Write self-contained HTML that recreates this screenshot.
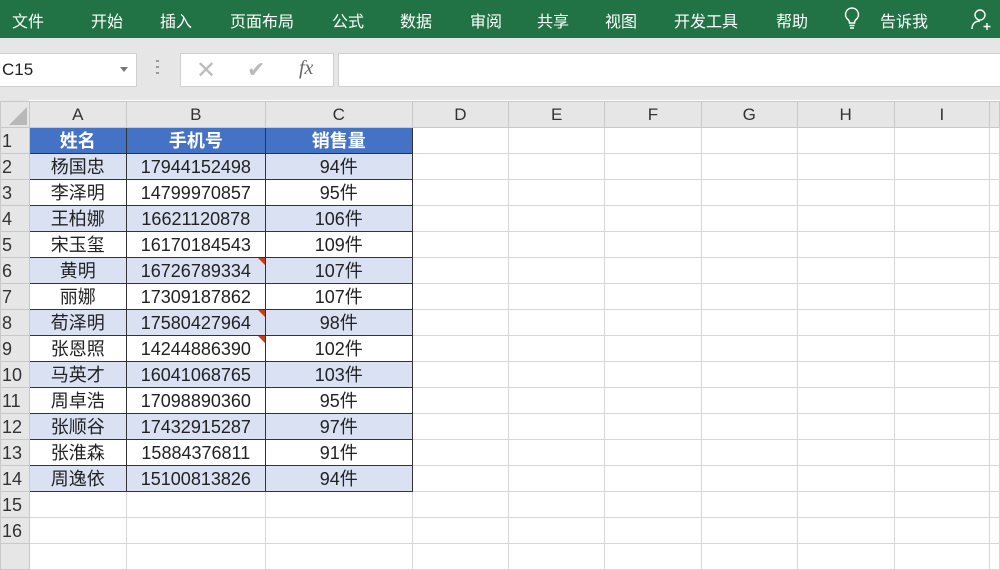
<!DOCTYPE html>
<html><head><meta charset="utf-8"><style>
*{margin:0;padding:0;box-sizing:border-box}
body{width:1000px;height:538px;overflow:hidden;background:#fff;font-family:"Liberation Sans","Noto Sans CJK SC",sans-serif;position:relative}
.top{position:absolute;left:0;top:0;width:1000px;height:38px;background:#217346;color:#fff;font-size:16px}
.top span{position:absolute;top:8px}
.gray{position:absolute;left:0;top:38px;width:1000px;height:62px;background:#e6e6e6}
.box{position:absolute;background:#fff;border:1px solid #d0d0d0}
table{position:absolute;left:0;top:101px;border-collapse:collapse;table-layout:fixed}
tr{height:26px}
td{height:26px;line-height:22px;border:1px solid #d6d6d6;font-size:18px;color:#222;text-align:center;padding:0;white-space:nowrap;overflow:hidden;position:relative}
tr.h td{background:#e6e6e6;color:#333;font-size:17px;border-color:#c8c8c8}
td.r{background:#e6e6e6;text-align:left;padding-left:1px;color:#333;border-color:#c8c8c8}
td.d{border-color:#333}
td.t{background:#4472c4;color:#fff;font-weight:bold;border-color:#333}
tr.b td.d{background:#d9e1f2}
.tri{position:absolute;right:0;top:0;width:0;height:0;border-left:7px solid transparent;border-top:7px solid #c43e1c}
</style></head><body>
<div class="top">
<span style="left:12px">文件</span><span style="left:91px">开始</span><span style="left:160px">插入</span><span style="left:230px">页面布局</span><span style="left:332px">公式</span><span style="left:400px">数据</span><span style="left:470px">审阅</span><span style="left:537px">共享</span><span style="left:605px">视图</span><span style="left:674px">开发工具</span><span style="left:776px">帮助</span><span style="left:880px">告诉我</span>
<svg style="position:absolute;left:843px;top:6px" width="18" height="24" viewBox="0 0 18 24" fill="none" stroke="#fff" stroke-width="1.5"><path d="M9 2a6.5 6.5 0 0 0-4 11.6c1 .9 1.5 2 1.5 3.4h5c0-1.4.5-2.5 1.5-3.4A6.5 6.5 0 0 0 9 2z"/><path d="M6.5 19.5h5M7 22h4"/></svg>
<svg style="position:absolute;left:970px;top:8px" width="24" height="24" viewBox="0 0 24 24" fill="none" stroke="#fff" stroke-width="1.4"><circle cx="10" cy="7" r="5"/><path d="M2 21c0-5 3-8 8-8"/><path d="M17 15v7M13.5 18.5h7"/></svg>
</div>
<div class="gray"></div>
<div class="box" style="left:-1px;top:53px;width:138px;height:34px"><span style="position:absolute;left:2px;top:6px;font-size:17px;color:#222">C15</span><span style="position:absolute;left:120px;top:13px;border-left:4px solid transparent;border-right:4px solid transparent;border-top:5px solid #777"></span></div>
<div style="position:absolute;left:156px;top:60px;width:3px;height:18px;background:repeating-linear-gradient(#999 0 2px,transparent 2px 6px)"></div>
<div class="box" style="left:180px;top:53px;width:154px;height:34px">
<span style="position:absolute;left:15px;top:2px;font-size:24px;color:#bbb">✕</span>
<span style="position:absolute;left:66px;top:3px;font-size:22px;color:#bbb">✔</span>
<span style="position:absolute;left:118px;top:3px;font-size:20px;color:#666;font-style:italic;font-family:'Liberation Serif',serif">fx</span></div>
<div class="box" style="left:338px;top:53px;width:663px;height:34px"></div>
<div style="position:absolute;left:0;top:100px;width:29px;height:27px;background:#e6e6e6"></div>
<table>
<colgroup><col style="width:29px"><col style="width:98px"><col style="width:140px"><col style="width:149px"><col style="width:99px"><col style="width:98px"><col style="width:99px"><col style="width:98px"><col style="width:99px"><col style="width:98px"><col style="width:10px"></colgroup>
<tr class="h"><td style="position:relative"><div style="position:absolute;right:2px;bottom:2px;border-left:18px solid transparent;border-bottom:18px solid #b8b8b8"></div></td><td>A</td><td>B</td><td>C</td><td>D</td><td>E</td><td>F</td><td>G</td><td>H</td><td>I</td><td></td></tr>
<tr><td class="r">1</td><td class="t">姓名</td><td class="t">手机号</td><td class="t">销售量</td><td></td><td></td><td></td><td></td><td></td><td></td><td></td></tr>
<tr class="b"><td class="r">2</td><td class="d">杨国忠</td><td class="d">17944152498</td><td class="d">94件</td><td></td><td></td><td></td><td></td><td></td><td></td><td></td></tr>
<tr><td class="r">3</td><td class="d">李泽明</td><td class="d">14799970857</td><td class="d">95件</td><td></td><td></td><td></td><td></td><td></td><td></td><td></td></tr>
<tr class="b"><td class="r">4</td><td class="d">王柏娜</td><td class="d">16621120878</td><td class="d">106件</td><td></td><td></td><td></td><td></td><td></td><td></td><td></td></tr>
<tr><td class="r">5</td><td class="d">宋玉玺</td><td class="d">16170184543</td><td class="d">109件</td><td></td><td></td><td></td><td></td><td></td><td></td><td></td></tr>
<tr class="b"><td class="r">6</td><td class="d">黄明</td><td class="d">16726789334<div class="tri"></div></td><td class="d">107件</td><td></td><td></td><td></td><td></td><td></td><td></td><td></td></tr>
<tr><td class="r">7</td><td class="d">丽娜</td><td class="d">17309187862</td><td class="d">107件</td><td></td><td></td><td></td><td></td><td></td><td></td><td></td></tr>
<tr class="b"><td class="r">8</td><td class="d">荀泽明</td><td class="d">17580427964<div class="tri"></div></td><td class="d">98件</td><td></td><td></td><td></td><td></td><td></td><td></td><td></td></tr>
<tr><td class="r">9</td><td class="d">张恩照</td><td class="d">14244886390<div class="tri"></div></td><td class="d">102件</td><td></td><td></td><td></td><td></td><td></td><td></td><td></td></tr>
<tr class="b"><td class="r">10</td><td class="d">马英才</td><td class="d">16041068765</td><td class="d">103件</td><td></td><td></td><td></td><td></td><td></td><td></td><td></td></tr>
<tr><td class="r">11</td><td class="d">周卓浩</td><td class="d">17098890360</td><td class="d">95件</td><td></td><td></td><td></td><td></td><td></td><td></td><td></td></tr>
<tr class="b"><td class="r">12</td><td class="d">张顺谷</td><td class="d">17432915287</td><td class="d">97件</td><td></td><td></td><td></td><td></td><td></td><td></td><td></td></tr>
<tr><td class="r">13</td><td class="d">张淮森</td><td class="d">15884376811</td><td class="d">91件</td><td></td><td></td><td></td><td></td><td></td><td></td><td></td></tr>
<tr class="b"><td class="r">14</td><td class="d">周逸依</td><td class="d">15100813826</td><td class="d">94件</td><td></td><td></td><td></td><td></td><td></td><td></td><td></td></tr>
<tr><td class="r">15</td><td></td><td></td><td></td><td></td><td></td><td></td><td></td><td></td><td></td><td></td></tr>
<tr><td class="r">16</td><td></td><td></td><td></td><td></td><td></td><td></td><td></td><td></td><td></td><td></td></tr>
<tr><td class="r"></td><td></td><td></td><td></td><td></td><td></td><td></td><td></td><td></td><td></td><td></td></tr>
</table>
</body></html>
